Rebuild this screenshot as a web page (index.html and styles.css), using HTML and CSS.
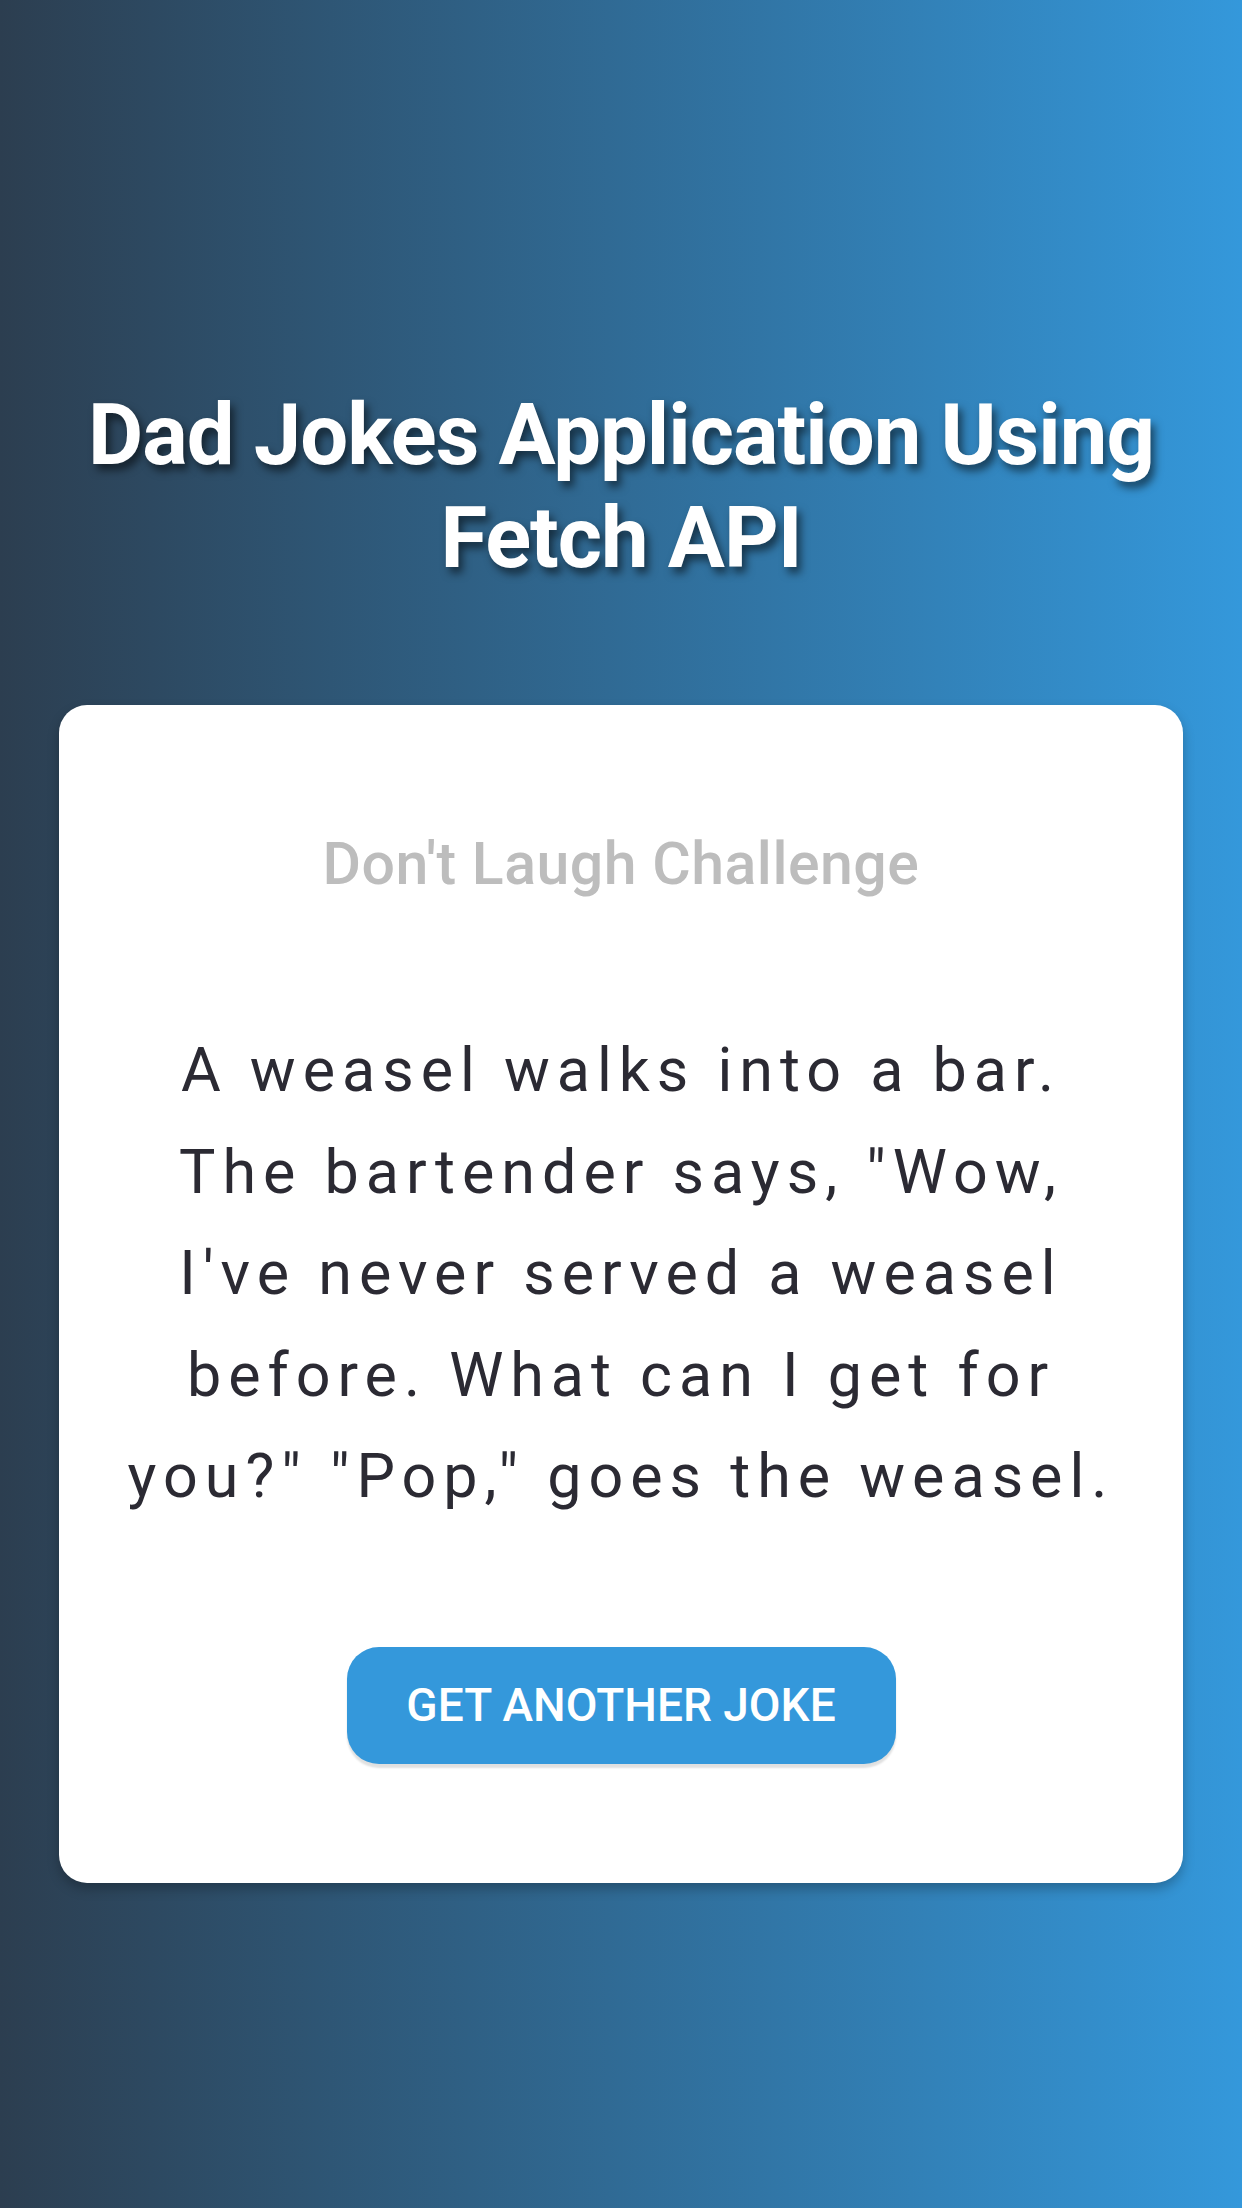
FILE: index.html
```html
<!DOCTYPE html>
<html lang="en">
<head>
<meta charset="utf-8">
<title>Dad Jokes Application Using Fetch API</title>
<link rel="stylesheet" href="styles.css">
</head>
<body>
<main class="page">
  <h1 class="title">Dad Jokes Application Using Fetch API</h1>
  <section class="card">
    <h3 class="subtitle">Don't Laugh Challenge</h3>
    <p class="joke">A weasel walks into a bar. The bartender says, "Wow, I've never served a weasel before. What can I get for you?" "Pop," goes the weasel.</p>
    <button class="btn">Get Another Joke</button>
  </section>
</main>
</body>
</html>
```
FILE: styles.css
```css
* { box-sizing: border-box; }
html, body { margin: 0; padding: 0; }
body {
  min-height: 2208px;
  background: linear-gradient(to right, #2c3e50, #3498db);
  font-family: Roboto, "Liberation Sans", sans-serif;
}
.page {
  display: flex;
  flex-direction: column;
  align-items: center;
  padding: 384px 58px 0 58px;
}
.title {
  margin: 0;
  color: #fff;
  font-size: 85px;
  font-weight: 700;
  line-height: 103px;
  text-align: center;
  letter-spacing: -1px;
  text-shadow: 4px 6px 8px rgba(0, 0, 0, 0.55);
  width: 1124px;
}
.card {
  margin-top: 115px;
  width: 1124px;
  background: #fff;
  border-radius: 28px;
  box-shadow: 0 6px 12px rgba(0, 0, 0, 0.25);
  display: flex;
  flex-direction: column;
  align-items: center;
  padding: 125px 60px 119px;
}
.subtitle {
  margin: 0;
  color: #bdbdbd;
  font-size: 59px;
  font-weight: 500;
  line-height: 67px;
  letter-spacing: 0.5px;
}
.joke {
  margin: 123px 0 0;
  color: #2b2a33;
  font-size: 61px;
  line-height: 101.5px;
  letter-spacing: 7px;
  text-align: center;
  max-width: 1004px;
}
.btn {
  margin-top: 119px;
  width: 549px;
  height: 117px;
  border: none;
  border-radius: 32px;
  background: #3498db;
  color: #fff;
  font-family: inherit;
  font-size: 46px;
  font-weight: 500;
  text-transform: uppercase;
  box-shadow: 0 4px 2px rgba(0, 0, 0, 0.12);
  cursor: pointer;
}
```
